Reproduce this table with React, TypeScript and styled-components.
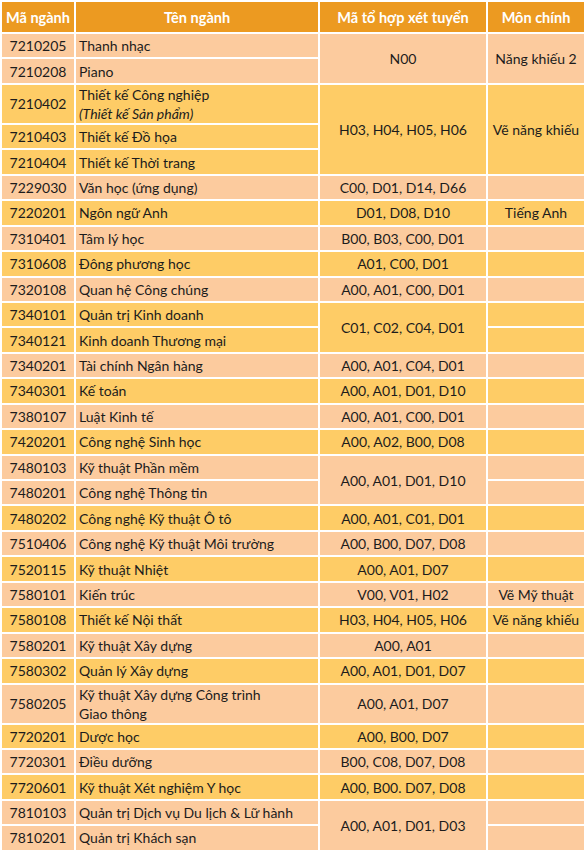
import styled, { createGlobalStyle } from "styled-components";

const GlobalStyle = createGlobalStyle`
  html, body {
    margin: 0;
    padding: 0;
    background: #ffffff;
  }
  body {
    font-family: Lato, "Liberation Sans", sans-serif;
    color: #1c1c1c;
  }
`;

const PEACH = "#fccb9e";
const YELLOW = "#fecc66";

interface Entry {
  code: string;
  name: string;
  note?: string;
  wrap?: boolean;
}

interface Group {
  rows: Entry[];
  combo: string;
  main?: string;
}

const groups: Group[] = [
  {
    rows: [
      { code: "7210205", name: "Thanh nhạc" },
      { code: "7210208", name: "Piano" },
    ],
    combo: "N00",
    main: "Năng khiếu 2",
  },
  {
    rows: [
      { code: "7210402", name: "Thiết kế Công nghiệp", note: "(Thiết kế Sản phẩm)" },
      { code: "7210403", name: "Thiết kế Đồ họa" },
      { code: "7210404", name: "Thiết kế Thời trang" },
    ],
    combo: "H03, H04, H05, H06",
    main: "Vẽ năng khiếu",
  },
  { rows: [{ code: "7229030", name: "Văn học (ứng dụng)" }], combo: "C00, D01, D14, D66" },
  { rows: [{ code: "7220201", name: "Ngôn ngữ Anh" }], combo: "D01, D08, D10", main: "Tiếng Anh" },
  { rows: [{ code: "7310401", name: "Tâm lý học" }], combo: "B00, B03, C00, D01" },
  { rows: [{ code: "7310608", name: "Đông phương học" }], combo: "A01, C00, D01" },
  { rows: [{ code: "7320108", name: "Quan hệ Công chúng" }], combo: "A00, A01, C00, D01" },
  {
    rows: [
      { code: "7340101", name: "Quản trị Kinh doanh" },
      { code: "7340121", name: "Kinh doanh Thương mại" },
    ],
    combo: "C01, C02, C04, D01",
  },
  { rows: [{ code: "7340201", name: "Tài chính Ngân hàng" }], combo: "A00, A01, C04, D01" },
  { rows: [{ code: "7340301", name: "Kế toán" }], combo: "A00, A01, D01, D10" },
  { rows: [{ code: "7380107", name: "Luật Kinh tế" }], combo: "A00, A01, C00, D01" },
  { rows: [{ code: "7420201", name: "Công nghệ Sinh học" }], combo: "A00, A02, B00, D08" },
  {
    rows: [
      { code: "7480103", name: "Kỹ thuật Phần mềm" },
      { code: "7480201", name: "Công nghệ Thông tin" },
    ],
    combo: "A00, A01, D01, D10",
  },
  { rows: [{ code: "7480202", name: "Công nghệ Kỹ thuật Ô tô" }], combo: "A00, A01, C01, D01" },
  { rows: [{ code: "7510406", name: "Công nghệ Kỹ thuật Môi trường" }], combo: "A00, B00, D07, D08" },
  { rows: [{ code: "7520115", name: "Kỹ thuật Nhiệt" }], combo: "A00, A01, D07" },
  { rows: [{ code: "7580101", name: "Kiến trúc" }], combo: "V00, V01, H02", main: "Vẽ Mỹ thuật" },
  { rows: [{ code: "7580108", name: "Thiết kế Nội thất" }], combo: "H03, H04, H05, H06", main: "Vẽ năng khiếu" },
  { rows: [{ code: "7580201", name: "Kỹ thuật Xây dựng" }], combo: "A00, A01" },
  { rows: [{ code: "7580302", name: "Quản lý Xây dựng" }], combo: "A00, A01, D01, D07" },
  {
    rows: [{ code: "7580205", name: "Kỹ thuật Xây dựng Công trình", note: "Giao thông", wrap: true }],
    combo: "A00, A01, D07",
  },
  { rows: [{ code: "7720201", name: "Dược học" }], combo: "A00, B00, D07" },
  { rows: [{ code: "7720301", name: "Điều dưỡng" }], combo: "B00, C08, D07, D08" },
  { rows: [{ code: "7720601", name: "Kỹ thuật Xét nghiệm Y học" }], combo: "A00, B00. D07, D08" },
  {
    rows: [
      { code: "7810103", name: "Quản trị Dịch vụ Du lịch & Lữ hành" },
      { code: "7810201", name: "Quản trị Khách sạn" },
    ],
    combo: "A00, A01, D01, D03",
  },
];

const Table = styled.table`
  width: 586px;
  border-collapse: separate;
  border-spacing: 2px;
  background: #ffffff;
  table-layout: fixed;
  font-size: 14px;
`;

const HeadCell = styled.th`
  height: 30px;
  padding: 0;
  background: #ec9a21;
  color: #ffffff;
  font-weight: 700;
  font-size: 14.5px;
  text-align: center;
  vertical-align: middle;
`;

const Row = styled.tr<{ $tall?: boolean }>`
  height: ${(p) => (p.$tall ? "38px" : "23.45px")};
`;

const Cell = styled.td<{ $bg: string; $align?: "left" | "center" }>`
  padding: 0 0 0 ${(p) => (p.$align === "left" ? "3px" : "0")};
  background: ${(p) => p.$bg};
  text-align: ${(p) => p.$align ?? "center"};
  vertical-align: middle;
  line-height: 19px;
  white-space: nowrap;
`;

const Note = styled.span<{ $italic?: boolean }>`
  display: block;
  font-style: ${(p) => (p.$italic ? "italic" : "normal")};
`;

export default function App() {
  return (
    <>
      <GlobalStyle />
      <Table>
        <colgroup>
          <col style={{ width: 72 }} />
          <col style={{ width: 242 }} />
          <col style={{ width: 166 }} />
          <col style={{ width: 96 }} />
        </colgroup>
        <thead>
          <tr>
            <HeadCell>Mã ngành</HeadCell>
            <HeadCell>Tên ngành</HeadCell>
            <HeadCell>Mã tổ hợp xét tuyển</HeadCell>
            <HeadCell>Môn chính</HeadCell>
          </tr>
        </thead>
        <tbody>
          {groups.flatMap((g, gi) => {
            const bg = gi % 2 === 0 ? PEACH : YELLOW;
            return g.rows.map((r, ri) => (
              <Row key={r.code} $tall={!!r.note}>
                <Cell $bg={bg}>{r.code}</Cell>
                <Cell $bg={bg} $align="left">
                  {r.name}
                  {r.note && <Note $italic={!r.wrap}>{r.note}</Note>}
                </Cell>
                {ri === 0 && (
                  <Cell $bg={bg} rowSpan={g.rows.length}>
                    {g.combo}
                  </Cell>
                )}
                {g.main !== undefined ? (
                  ri === 0 && (
                    <Cell $bg={bg} rowSpan={g.rows.length}>
                      {g.main}
                    </Cell>
                  )
                ) : (
                  <Cell $bg={bg} />
                )}
              </Row>
            ));
          })}
        </tbody>
      </Table>
    </>
  );
}
